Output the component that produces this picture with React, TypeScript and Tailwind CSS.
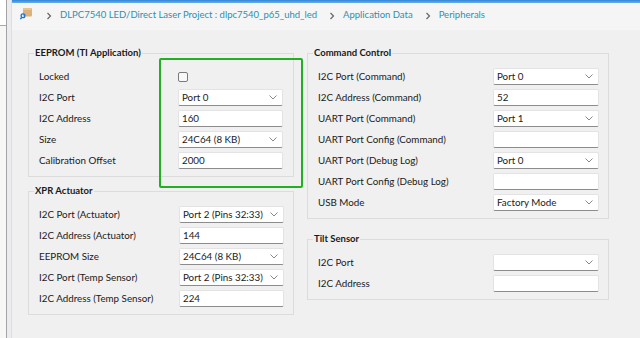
const font = { fontFamily: "Lato, 'Noto Sans', sans-serif" };

function Chevron() {
  return (
    <div className="ml-[12px] mr-[8px]">
      <svg width="6" height="8" viewBox="0 0 6 8" className="block">
        <path d="M1.5 1 L4.5 4 L1.5 7" fill="none" stroke="#666" strokeWidth="1.2" />
      </svg>
    </div>
  );
}

function ProjectIcon() {
  return (
    <svg width="12" height="12" viewBox="0 0 12 12" className="shrink-0 mb-[3px] mr-[2px]">
      <rect x="3" y="0" width="9" height="8.5" rx="1" fill="#ddb27a" />
      <rect x="3" y="0" width="9" height="2" rx="1" fill="#e9c48f" />
      <circle cx="3" cy="7.8" r="1.9" fill="none" stroke="#1f6fd1" strokeWidth="1.3" />
      <path d="M1.7 9.3 L0.4 11.2" stroke="#1f6fd1" strokeWidth="1.5" />
    </svg>
  );
}

function DropArrow() {
  return (
    <svg width="8" height="5" viewBox="0 0 8 5" className="shrink-0">
      <path d="M0.5 0.5 L4 4 L7.5 0.5" fill="none" stroke="#7a7a7a" strokeWidth="0.9" />
    </svg>
  );
}

type Field = { label: string; kind: "select" | "text" | "check"; value?: string };

function Control({ field, width }: { field: Field; width: string }) {
  if (field.kind === "check") {
    return (
      <div className={`${width} h-[17px] flex items-center`}>
        <div className="w-[10px] h-[10px] rounded-[2px] border border-[#7a7a7a] bg-[#f8f8f8]" />
      </div>
    );
  }
  return (
    <div
      className={`${width} h-[17px] flex items-center justify-between px-[3px] bg-white border border-[#e3e3e3] border-b-[#8c8c8c] rounded-[2px] text-[9.8px] text-[#1a1a1a] whitespace-nowrap`}
    >
      <span className="leading-none">{field.value}</span>
      {field.kind === "select" && (
        <span className="pr-[2px]">
          <DropArrow />
        </span>
      )}
    </div>
  );
}

function Group({
  title,
  fields,
  width,
  labelWidth,
  inputWidth,
  pad,
}: {
  title: string;
  fields: Field[];
  width: string;
  labelWidth: string;
  inputWidth: string;
  pad: string;
}) {
  return (
    <fieldset className={`${width} border border-[#dcdcdc]`}>
      <legend className="ml-[5px] px-[1px] text-[9.5px] leading-[14px] font-bold text-[#1a1a1a] whitespace-nowrap">
        {title}
      </legend>
      <div className={`flex flex-col gap-[4px] ${pad} pt-[8px] pb-[7px]`}>
        {fields.map((f) => (
          <div key={f.label} className="flex items-center h-[17px]">
            <div className={`${labelWidth} text-[9.8px] text-[#1a1a1a] leading-none whitespace-nowrap`}>
              {f.label}
            </div>
            <Control field={f} width={inputWidth} />
          </div>
        ))}
      </div>
    </fieldset>
  );
}

const eeprom: Field[] = [
  { label: "Locked", kind: "check" },
  { label: "I2C Port", kind: "select", value: "Port 0" },
  { label: "I2C Address", kind: "text", value: "160" },
  { label: "Size", kind: "select", value: "24C64 (8 KB)" },
  { label: "Calibration Offset", kind: "text", value: "2000" },
];

const xpr: Field[] = [
  { label: "I2C Port (Actuator)", kind: "select", value: "Port 2 (Pins 32:33)" },
  { label: "I2C Address (Actuator)", kind: "text", value: "144" },
  { label: "EEPROM Size", kind: "select", value: "24C64 (8 KB)" },
  { label: "I2C Port (Temp Sensor)", kind: "select", value: "Port 2 (Pins 32:33)" },
  { label: "I2C Address (Temp Sensor)", kind: "text", value: "224" },
];

const command: Field[] = [
  { label: "I2C Port (Command)", kind: "select", value: "Port 0" },
  { label: "I2C Address (Command)", kind: "text", value: "52" },
  { label: "UART Port (Command)", kind: "select", value: "Port 1" },
  { label: "UART Port Config (Command)", kind: "text", value: "" },
  { label: "UART Port (Debug Log)", kind: "select", value: "Port 0" },
  { label: "UART Port Config (Debug Log)", kind: "text", value: "" },
  { label: "USB Mode", kind: "select", value: "Factory Mode" },
];

const tilt: Field[] = [
  { label: "I2C Port", kind: "select", value: "" },
  { label: "I2C Address", kind: "text", value: "" },
];

export default function App() {
  return (
    <div className="relative w-[640px] h-[338px] flex overflow-hidden bg-[#f0f0f0]" style={font}>
      {/* left dock edge */}
      <div className="w-[12px] h-full flex shrink-0">
        <div className="w-[6px] h-full flex flex-col bg-[#f7f7f7]">
          <div className="h-[26px] bg-white border-b border-[#a8a8a8]" />
        </div>
        <div className="w-[1px] h-full bg-[#a3a3a3]" />
        <div className="w-[5px] h-full bg-[#ececf0] border-r border-[#dedede]" />
      </div>

      <div className="flex-1 flex flex-col">
        <div className="h-[3px] bg-gradient-to-b from-[#2f86d8] to-[#6aaee8]" />
        {/* breadcrumb */}
        <div className="h-[27px] flex items-center bg-[#f5f5f5] pl-[8px] pb-[2px] text-[9.5px] text-[#2a90b4] whitespace-nowrap">
          <ProjectIcon />
          <Chevron />
          <span>DLPC7540 LED/Direct Laser Project : dlpc7540_p65_uhd_led</span>
          <Chevron />
          <span>Application Data</span>
          <Chevron />
          <span>Peripherals</span>
        </div>

        {/* content */}
        <div className="flex gap-[13px] pl-[16px] pt-[16px]">
          <div className="flex flex-col gap-[7px]">
            <Group title="EEPROM (TI Application)" fields={eeprom} width="w-[266px]" labelWidth="w-[139px]" inputWidth="w-[105px]" pad="pl-[10px] pr-[10px]" />
            <Group title="XPR Actuator" fields={xpr} width="w-[266px]" labelWidth="w-[140px]" inputWidth="w-[105px]" pad="pl-[10px] pr-[9px]" />
          </div>
          <div className="flex flex-col gap-[13px]">
            <Group title="Command Control" fields={command} width="w-[302px]" labelWidth="w-[175px]" inputWidth="w-[106px]" pad="pl-[10px] pr-[9px]" />
            <Group title="Tilt Sensor" fields={tilt} width="w-[302px]" labelWidth="w-[175px]" inputWidth="w-[106px]" pad="pl-[10px] pr-[9px]" />
          </div>
        </div>
      </div>

      {/* highlight annotation */}
      <div className="absolute left-[159px] top-[58px] w-[144px] h-[130px] border-2 border-[#22b022] rounded-[2px] pointer-events-none" />
    </div>
  );
}
